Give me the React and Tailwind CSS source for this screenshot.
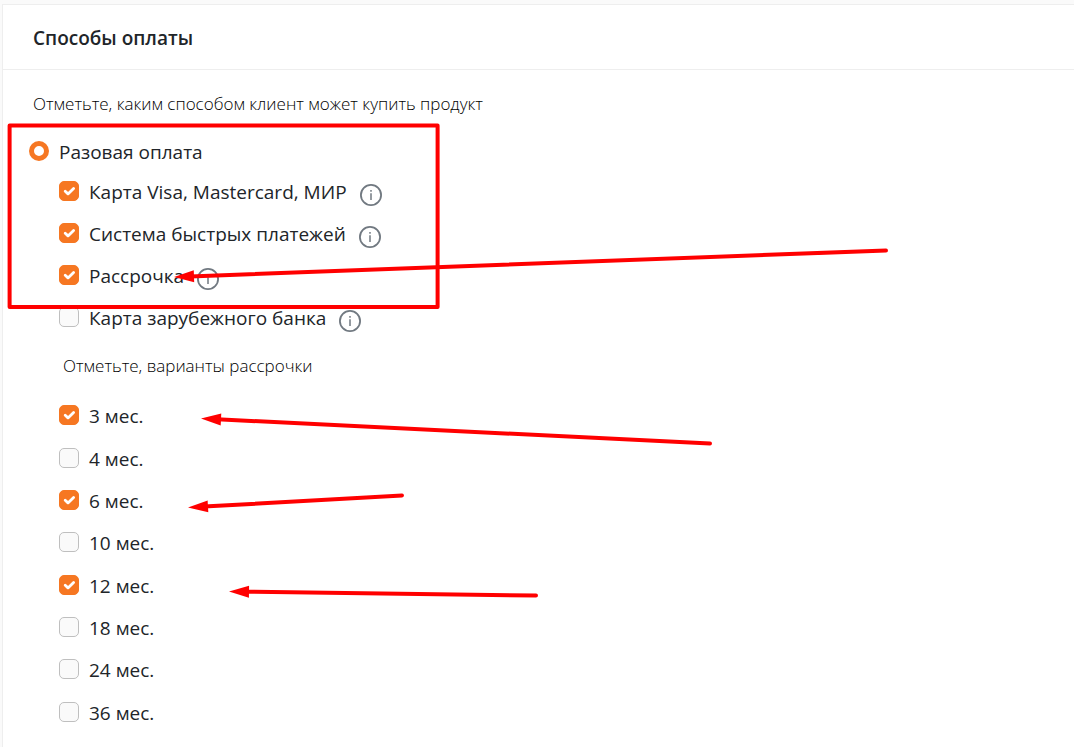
import { useState } from "react";

const methods = [
  { id: "card", label: "Карта Visa, Mastercard, МИР" },
  { id: "sbp", label: "Система быстрых платежей" },
  { id: "installment", label: "Рассрочка" },
  { id: "foreign", label: "Карта зарубежного банка" },
];

const terms = [3, 4, 6, 10, 12, 18, 24, 36];

// x1/y1 is the tail, x2/y2 is the tip
const arrows = [
  { x1: 886, y1: 250.5, x2: 174, y2: 277 },
  { x1: 710, y1: 443.5, x2: 201, y2: 418.5 },
  { x1: 402, y1: 495.5, x2: 188, y2: 507.5 },
  { x1: 536, y1: 595.5, x2: 229, y2: 591.5 },
];

function Checkbox({ id, label, checked, onChange }) {
  return (
    <div className="flex items-center">
      <span className="relative mr-2.5 block size-5 shrink-0">
        <input
          id={id}
          type="checkbox"
          checked={checked}
          onChange={onChange}
          className="block size-5 appearance-none rounded-[5px] border border-[#bfbfbf] bg-[#fafafa] checked:border-[#f67722] checked:bg-[#f67722]"
        />
        {checked && (
          <svg viewBox="0 0 20 20" className="pointer-events-none absolute inset-0 size-5" fill="none">
            <path d="M6.2 10.3 9 12.9 14.6 7.4" stroke="white" strokeWidth="2.8" strokeLinecap="round" strokeLinejoin="round" />
          </svg>
        )}
      </span>
      <label htmlFor={id} className="pt-0.5 text-[19px] leading-6">
        {label}
      </label>
    </div>
  );
}

function InfoButton({ label }) {
  return (
    <button type="button" aria-label={label} className="mt-2 ml-3 block shrink-0">
      <svg viewBox="0 0 24 24" className="size-6" fill="none" stroke="#717981">
        <circle cx="12" cy="12" r="10.1" strokeWidth="1.8" />
        <path d="M12 10.2v6.8" strokeWidth="1.5" />
        <path d="M12 7v1.8" strokeWidth="1.5" />
      </svg>
    </button>
  );
}

function Annotations() {
  return (
    <svg className="pointer-events-none absolute top-0 left-0 h-full w-full overflow-visible" fill="none" stroke="#ff0000" strokeWidth="4">
      <rect x="9.6" y="125.5" width="428" height="181.5" strokeLinejoin="round" />
      {arrows.map((a) => {
        const angle = (Math.atan2(a.y2 - a.y1, a.x2 - a.x1) * 180) / Math.PI;
        return (
          <g key={a.y1}>
            <line x1={a.x1} y1={a.y1} x2={a.x2 + 16} y2={a.y2 + (a.y1 - a.y2) * (16 / (a.x1 - a.x2))} strokeLinecap="round" />
            <path
              d="M0 0 -20 -6V6Z"
              fill="#ff0000"
              stroke="none"
              transform={`translate(${a.x2} ${a.y2}) rotate(${angle})`}
            />
          </g>
        );
      })}
    </svg>
  );
}

export default function App() {
  const [mode, setMode] = useState("single");
  const [selectedMethods, setSelectedMethods] = useState(["card", "sbp", "installment"]);
  const [selectedTerms, setSelectedTerms] = useState([3, 6, 12]);

  const toggle = (list, setList, value) => {
    setList(list.includes(value) ? list.filter((v) => v !== value) : [...list, value]);
  };

  return (
    <div className="relative min-h-screen bg-[#fafafa] pt-1 pl-0.5 font-['Open_Sans','Noto_Sans',sans-serif] text-[#212529]">
      <section className="min-h-[calc(100vh-4px)] border-t border-l border-[#eeeeee] bg-white">
        <header className="border-b border-[#eeeeee] px-[30px] pt-[21px] pb-[19px]">
          <h2 className="text-[19px] leading-6 font-semibold">Способы оплаты</h2>
        </header>

        <div className="pt-5 pr-5 pl-[26px]">
          <p className="pl-1 text-[17px] leading-7 font-[350] text-black">Отметьте, каким способом клиент может купить продукт</p>

          {/* Payment methods */}
          <div className="mt-5 flex items-center">
            <input
              id="mode-single"
              type="radio"
              name="mode"
              checked={mode === "single"}
              onChange={() => setMode("single")}
              className="mr-2.5 block size-5 shrink-0 appearance-none rounded-full border border-[#bfbfbf] bg-white checked:border-[5px] checked:border-[#f67722]"
            />
            <label htmlFor="mode-single" className="pt-0.5 text-[19px] leading-6">
              Разовая оплата
            </label>
          </div>

          <div className="mt-1.5 pl-[30px]">
            {methods.map((m) => (
              <div key={m.id} className="flex h-[42px] items-center">
                <Checkbox
                  id={m.id}
                  label={m.label}
                  checked={selectedMethods.includes(m.id)}
                  onChange={() => toggle(selectedMethods, setSelectedMethods, m.id)}
                />
                <InfoButton label={m.label} />
              </div>
            ))}
          </div>

          {/* Installment terms */}
          <p className="mt-4 pl-[34px] text-[17px] leading-6 font-[350] text-black">Отметьте, варианты рассрочки</p>
          <div className="mt-4 grid min-h-[339px] auto-rows-fr items-center pl-[30px]">
            {terms.map((t) => (
              <Checkbox
                key={t}
                id={`term-${t}`}
                label={`${t} мес.`}
                checked={selectedTerms.includes(t)}
                onChange={() => toggle(selectedTerms, setSelectedTerms, t)}
              />
            ))}
          </div>
        </div>
      </section>
      <Annotations />
    </div>
  );
}
